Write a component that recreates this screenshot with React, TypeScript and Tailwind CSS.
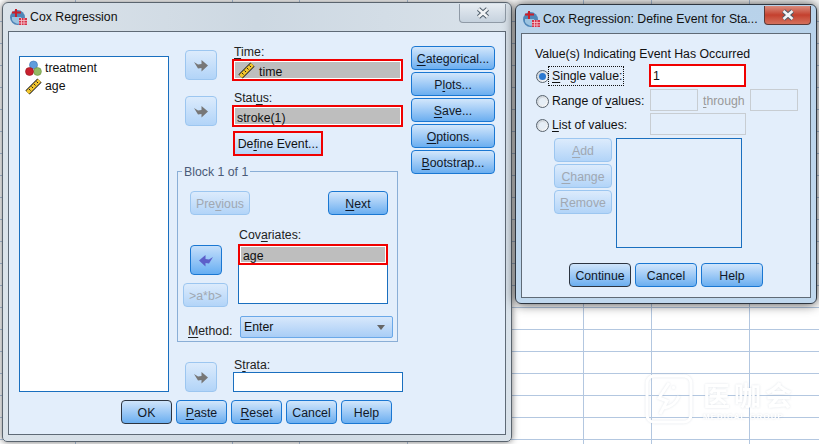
import type { ReactNode } from "react";

const gridCols = [76, 157, 67, 108, 176, 68, 98, 70];

function Sheet() {
  const cells = Array.from({ length: 21 * gridCols.length });
  return (
    <div className="grid h-[444px] grid-cols-[76px_157px_67px_108px_176px_68px_98px_70px] grid-rows-[repeat(21,22px)] overflow-hidden bg-white">
      {cells.map((_, i) => (
        <div key={i} className="border-r border-b border-[#b3c7e0]" />
      ))}
    </div>
  );
}

function AppIcon() {
  return (
    <svg width="18" height="18" viewBox="0 0 18 18" className="shrink-0">
      <circle cx="8.5" cy="9.5" r="7.5" fill="#4f86b8" />
      <path d="M3 12 a7 7 0 0 0 11 2 l-2-5 h-9z" fill="#9cc3e0" />
      <path d="M3 4.5h9M7 1v8" stroke="#c8202c" strokeWidth="2" fill="none" />
      <rect x="10" y="10" width="8" height="7" fill="#d4334a" />
      <path d="M10 12.5h8M10 15h8M12.5 10v7M15 10v7" stroke="#f6c9cf" strokeWidth="0.8" />
    </svg>
  );
}

function CloseIcon() {
  return (
    <svg width="14" height="12" viewBox="0 0 14 12">
      <path d="M2.5 2 11.5 10M11.5 2 2.5 10" stroke="#4d5b68" strokeWidth="4.5" />
      <path d="M2.5 2 11.5 10M11.5 2 2.5 10" stroke="#f2f4f6" strokeWidth="2.6" />
    </svg>
  );
}

function Ruler() {
  return (
    <svg width="17" height="17" viewBox="0 0 17 17" className="shrink-0">
      <path d="M2.5 14.5 14.5 2.5" stroke="#222" strokeWidth="6" />
      <path d="M2.5 14.5 14.5 2.5" stroke="#f3c62c" strokeWidth="4" />
      <path d="M4 11l1.5 1.5M6.5 8.5 8 10M9 6l1.5 1.5M11.5 3.5 13 5" stroke="#222" strokeWidth="1" />
    </svg>
  );
}

function Nominal() {
  return (
    <svg width="17" height="17" viewBox="0 0 17 17" className="shrink-0">
      <circle cx="8.5" cy="5" r="4" fill="#5f9ddc" stroke="#3c74b0" strokeWidth="0.6" />
      <circle cx="12.5" cy="11.5" r="3.9" fill="#93bb63" stroke="#6b9243" strokeWidth="0.6" />
      <circle cx="4.5" cy="11.5" r="4" fill="#c9202e" stroke="#96151f" strokeWidth="0.6" />
    </svg>
  );
}

function Arrow({ back }: { back?: boolean }) {
  return (
    <svg width="15" height="13" viewBox="0 0 15 13" className={back ? "-scale-x-100" : ""}>
      <path d="M0 3 4 5.5 7.5 5 7.5 1 14 6.5 7.5 12.5 7.5 9 4 9.5Z" fill={back ? "#5d5fc9" : "#777777"} />
    </svg>
  );
}

function ArrowButton({ back, className = "" }: { back?: boolean; className?: string }) {
  const tone = back
    ? "border-[#1a77d2] from-[#c5dffa] to-[#66aef2]"
    : "border-[#9cc6f0] from-[#dcebfc] to-[#b2d4f8]";
  return (
    <div className={`flex h-[30px] w-[32px] shrink-0 items-center justify-center rounded-[4px] border bg-linear-to-b ${tone} ${className}`}>
      <Arrow back={back} />
    </div>
  );
}

function Btn({
  children,
  w,
  disabled,
  isDefault,
}: {
  children: ReactNode;
  w: string;
  disabled?: boolean;
  isDefault?: boolean;
}) {
  const tone = disabled
    ? "border-[#9cc6f0] from-[#dcebfc] to-[#b2d4f8] text-[#a0a8b2]"
    : isDefault
      ? "border-[#2c3440] from-[#cfe4fa] to-[#6aaef0] text-[#101828]"
      : "border-[#1a77d2] from-[#d2e6fb] to-[#6aaef0] text-[#101828]";
  return (
    <div className={`flex h-[24px] shrink-0 items-center justify-center rounded-[4px] border bg-linear-to-b pt-[2px] ${tone} ${w}`}>
      <span>{children}</span>
    </div>
  );
}

function U({ children }: { children: ReactNode }) {
  return <span className="underline underline-offset-2">{children}</span>;
}

function RedField({ children, h = "h-[22px]" }: { children: ReactNode; h?: string }) {
  return (
    <div className={`border-2 border-[#f00000] bg-white p-px ${h}`}>
      <div className="flex h-full items-center gap-[4px] bg-[#bebebe] pt-[4px] pl-[2px] text-[#111]">{children}</div>
    </div>
  );
}

function Radio({ on }: { on?: boolean }) {
  return (
    <div className="mt-[2px] flex h-[13px] w-[13px] shrink-0 items-center justify-center rounded-full border border-[#59636e] bg-linear-to-br from-[#c4ccd4] to-white">
      <div className={`h-[7px] w-[7px] rounded-full ${on ? "bg-[#2b78d0]" : "bg-[#e6eef6]"}`} />
    </div>
  );
}

function Titlebar({ text, active }: { text: string; active?: boolean }) {
  return (
    <div className="flex h-[28px] items-center pl-px text-[#111]">
      <AppIcon />
      <span className="ml-[3px]">{text}</span>
      <div
        className={`ml-auto flex h-[19px] w-[47px] shrink-0 -translate-y-[4px] items-center justify-center rounded-b-[4px] border border-t-0 ${
          active
            ? "border-[#5a3a38] bg-linear-to-b from-[#d98a7c] via-[#c4402e] to-[#d4705c]"
            : "border-[#8f9aa6] bg-linear-to-b from-[#e6ecf2] to-[#c6d2de]"
        }`}
      >
        <CloseIcon />
      </div>
    </div>
  );
}

function CoxDialog() {
  return (
    <div className="absolute top-[2px] left-[2px] h-[440px] w-[510px] rounded-t-[6px] rounded-b-[5px] border border-[#5a646e] bg-linear-to-r from-[#dbe3ea] via-[#cdd8e2] to-[#d9e2ea] px-[5px] pb-[6px] shadow-[0_0_7px_rgba(0,0,0,0.55)]">
      <Titlebar text="Cox Regression" />
      <div className="h-[404px] border border-[#5f6a76] bg-[#e3eefb]">
        <div className="flex pt-[14px] pl-[10px]">
          {/* source variables */}
          <div className="mt-[10px] h-[336px] w-[150px] shrink-0 border border-[#1a6fbf] bg-white pt-[2px] pl-[5px] text-[#111]">
            <div className="flex h-[18px] items-center gap-[3px]">
              <Nominal />
              <span>treatment</span>
            </div>
            <div className="flex h-[18px] items-center gap-[3px]">
              <Ruler />
              <span>age</span>
            </div>
          </div>

          {/* middle column */}
          <div className="ml-[8px] flex w-[226px] shrink-0 flex-col">
            <div className="flex">
              <ArrowButton className="mt-[4px] ml-[8px]" />
              <div className="ml-[15px] flex-1">
                <div className="h-[13px] pl-[2px] leading-[13px]">
                  <U>T</U>ime:
                </div>
                <RedField>
                  <span className="-mt-[4px] ml-[1px]">
                    <Ruler />
                  </span>
                  time
                </RedField>
              </div>
            </div>
            <div className="mt-[11px] flex">
              <ArrowButton className="mt-[4px] ml-[8px]" />
              <div className="ml-[15px] flex-1">
                <div className="h-[13px] pl-[2px] leading-[13px]">
                  Stat<U>u</U>s:
                </div>
                <RedField>stroke(1)</RedField>
              </div>
            </div>
            <div className="mt-[4px] ml-[56px] h-[25px] w-[90px] border-2 border-[#f00000] bg-linear-to-b from-[#e4effc] to-[#b5d5f8]">
              <div className="flex h-full items-center justify-center pt-[2px] text-[#111]">
                <span>
                  De<U>f</U>ine Event...
                </span>
              </div>
            </div>

            {/* block group */}
            <div className="relative mt-[15px] h-[171px] w-[221px] border border-[#8aaed6] pt-[19px] pl-[12px]">
              <span className="absolute -top-[7px] left-[4px] bg-[#e3eefb] px-[2px] leading-[15px] text-[#4a5a78]">Block 1 of 1</span>
              <div className="flex w-[198px] justify-between">
                <Btn w="w-[60px]" disabled>
                  Pre<U>v</U>ious
                </Btn>
                <Btn w="w-[60px]">
                  <U>N</U>ext
                </Btn>
              </div>
              <div className="-ml-[7px] flex">
                <div className="flex w-[45px] flex-col items-center pt-[30px]">
                  <ArrowButton back />
                  <div className="mt-[8px]">
                    <Btn w="w-[45px]" disabled>
                      &gt;a*b&gt;
                    </Btn>
                  </div>
                </div>
                <div className="ml-[10px] w-[150px]">
                  <div className="mt-[11px] h-[18px] pl-[1px] leading-[18px]">
                    Co<span>v</span>
                    <U>a</U>riates:
                  </div>
                  <div className="h-[60px] border border-[#1a6fbf] bg-white">
                    <div className="-m-px">
                      <RedField h="h-[21px]">age</RedField>
                    </div>
                  </div>
                </div>
              </div>
              <div className="mt-[9px] -ml-[2px] flex items-end">
                <span className="-mb-[2px] w-[52px] shrink-0">
                  <U>M</U>ethod:
                </span>
                <div className="flex h-[22px] w-[153px] items-center justify-between rounded-[2px] border border-[#6aa8e8] bg-linear-to-b from-[#d8e8fb] to-[#a8cdf6] px-[3px] text-[#111]">
                  <span>Enter</span>
                  <span className="mr-[4px] h-0 w-0 border-x-[4px] border-t-[5px] border-x-transparent border-t-[#666]" />
                </div>
              </div>
            </div>

            {/* strata */}
            <div className="mt-[17px] flex">
              <ArrowButton className="mt-[3px] ml-[8px]" />
              <div className="ml-[16px] flex-1">
                <div className="h-[13px] pl-[1px] leading-[13px]">
                  S<U>t</U>rata:
                </div>
                <div className="h-[20px] border border-[#1a6fbf] bg-white" />
              </div>
            </div>
          </div>

          {/* side buttons */}
          <div className="ml-[8px] flex w-[84px] flex-col gap-[2px]">
            <Btn w="w-[84px]">
              <U>C</U>ategorical...
            </Btn>
            <Btn w="w-[84px]">
              P<U>l</U>ots...
            </Btn>
            <Btn w="w-[84px]">
              <U>S</U>ave...
            </Btn>
            <Btn w="w-[84px]">
              <U>O</U>ptions...
            </Btn>
            <Btn w="w-[84px]">
              <U>B</U>ootstrap...
            </Btn>
          </div>
        </div>

        <div className="mt-[8px] ml-[112px] flex gap-[4px]">
          <Btn w="w-[51px]" isDefault>
            OK
          </Btn>
          <Btn w="w-[51px]">
            <U>P</U>aste
          </Btn>
          <Btn w="w-[51px]">
            <U>R</U>eset
          </Btn>
          <Btn w="w-[51px]">Cancel</Btn>
          <Btn w="w-[51px]">Help</Btn>
        </div>
      </div>
    </div>
  );
}

function DefineEventDialog() {
  return (
    <div className="absolute top-[4px] left-[515px] h-[300px] w-[302px] rounded-t-[6px] rounded-b-[6px] border border-[#2e3640] bg-linear-to-b from-[#b8d2ea] to-[#c0d8ee] px-[5px] pb-[5px] shadow-[0_0_12px_rgba(0,0,0,0.75)]">
      <Titlebar text="Cox Regression: Define Event for Sta..." active />
      <div className="h-[265px] border border-[#5f6a76] bg-[#e3eefb] pt-[13px] pl-[13px] text-[#111]">
        <div className="h-[14px] leading-[14px]">Value(s) Indicating Event Has Occurred</div>
        <div className="mt-[3px] flex h-[23px] items-center pl-px">
          <Radio on />
          <div className="-ml-px flex h-[20px] w-[76px] shrink-0 items-center border border-dotted border-[#111] pt-[2px] pl-[3px]">
            <span>
              <U>S</U>ingle value:
            </span>
          </div>
          <div className="ml-[25px] flex h-[23px] w-[97px] items-center border-2 border-[#f00000] bg-white pt-[2px] pl-[2px]">1</div>
        </div>
        <div className="mt-[2px] flex h-[22px] items-center pl-px">
          <Radio />
          <span className="mt-[2px] ml-[3px] w-[98px] shrink-0">
            Range of <U>v</U>alues:
          </span>
          <div className="h-[22px] w-[48px] border border-[#c8cdd2]" />
          <span className="mt-[2px] ml-[5px] w-[47px] shrink-0 text-[#999]">
            <U>t</U>hrough
          </span>
          <div className="h-[22px] w-[48px] border border-[#c8cdd2]" />
        </div>
        <div className="mt-[2px] flex h-[22px] items-center pl-px">
          <Radio />
          <span className="mt-[2px] ml-[3px] w-[98px] shrink-0">
            <U>L</U>ist of values:
          </span>
          <div className="h-[22px] w-[96px] border border-[#c8cdd2]" />
        </div>
        <div className="mt-[3px] ml-[19px] flex gap-[4px]">
          <div className="flex flex-col gap-[2px]">
            <Btn w="w-[58px]" disabled>
              <U>A</U>dd
            </Btn>
            <Btn w="w-[58px]" disabled>
              <U>C</U>hange
            </Btn>
            <Btn w="w-[58px]" disabled>
              <U>R</U>emove
            </Btn>
          </div>
          <div className="h-[110px] w-[126px] border border-[#1a6fbf]" />
        </div>
        <div className="mt-[15px] ml-[34px] flex gap-[4px]">
          <Btn w="w-[62px]" isDefault>
            Continue
          </Btn>
          <Btn w="w-[62px]">Cancel</Btn>
          <Btn w="w-[62px]">Help</Btn>
        </div>
      </div>
    </div>
  );
}

function Watermark() {
  return (
    <div className="absolute top-[374px] left-[645px] flex text-white [filter:drop-shadow(0_0_1px_rgba(120,135,160,0.22))]">
      <svg width="48" height="50" viewBox="0 0 48 50" fill="none" stroke="#ffffff" strokeWidth="3">
        <rect x="2" y="2" width="44" height="46" rx="7" />
        <path d="M24 9 14 24l8 3-7 13M19 34c8-1 13-7 15-12M28 12l1 3" />
      </svg>
      <div className="ml-[10px] flex flex-col items-start">
        <span className="mt-[7px] text-[27px] leading-[27px] font-bold tracking-[4px] [font-family:'Noto_Sans_CJK_SC',sans-serif]">医咖会</span>
        <span className="mt-[5px] text-[8px] leading-[8px] font-bold tracking-[1px]">MEDICAL GROUP</span>
      </div>
    </div>
  );
}

export default function App() {
  return (
    <div className="relative h-[444px] w-[819px] overflow-hidden text-[12.3px] whitespace-nowrap text-[#222] [font-family:'Liberation_Sans',Arial,sans-serif]">
      <Sheet />
      <Watermark />
      <CoxDialog />
      <DefineEventDialog />
    </div>
  );
}
